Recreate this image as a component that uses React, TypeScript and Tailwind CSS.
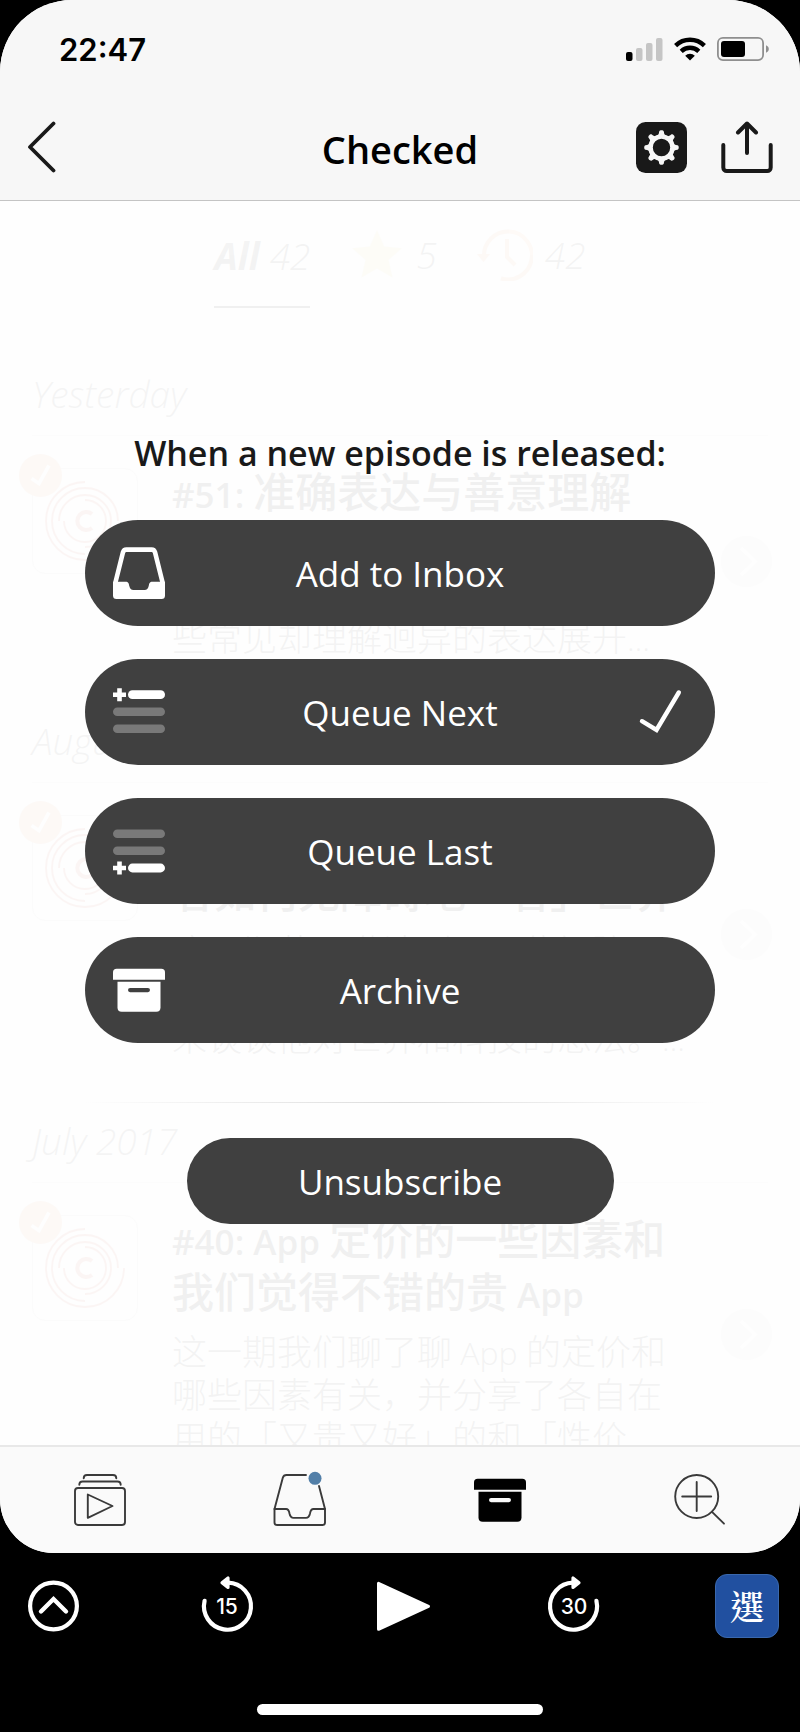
import React from "react";

const INK = "#191919";

function SignalIcon() {
  return (
    <svg width="37" height="24" viewBox="0 0 37 24" aria-hidden="true">
      <rect x="0" y="15" width="6.5" height="9" rx="2" fill="#000" />
      <rect x="10" y="11" width="6.5" height="13" rx="2" fill="#c5c5c5" />
      <rect x="20" y="6" width="6.5" height="18" rx="2" fill="#c5c5c5" />
      <rect x="30" y="1" width="6.5" height="23" rx="2" fill="#c5c5c5" />
    </svg>
  );
}

function WifiIcon() {
  return (
    <svg width="32" height="24" viewBox="0 0 32 24" fill="none" stroke="#000" strokeWidth="4.4" aria-hidden="true">
      <path d="M1.6 8.6a20.6 20.6 0 0 1 28.8 0" />
      <path d="M7.2 14.4a12.6 12.6 0 0 1 17.6 0" />
      <path d="M16 23.6l-4.8-4.8a6.8 6.8 0 0 1 9.6 0z" fill="#000" stroke="none" />
    </svg>
  );
}

function BatteryIcon() {
  return (
    <svg width="52" height="24" viewBox="0 0 52 24" aria-hidden="true">
      <rect x="0.9" y="0.9" width="45.2" height="22.2" rx="5" fill="none" stroke="#8f8f8f" strokeWidth="1.8" />
      <rect x="4" y="4" width="24" height="16" rx="3" fill="#000" />
      <path d="M49 8.2c1.8.8 2.8 2.1 2.8 3.8s-1 3-2.8 3.8z" fill="#8f8f8f" />
    </svg>
  );
}

function BackIcon() {
  return (
    <svg width="30" height="52" viewBox="0 0 30 52" fill="none" stroke={INK} strokeWidth="3.8" strokeLinecap="round" strokeLinejoin="round" aria-hidden="true">
      <path d="M26.5 2.5L3 26L26.5 49.5" />
    </svg>
  );
}

function GearIcon() {
  return (
    <svg width="51" height="51" viewBox="0 0 51 51" aria-hidden="true">
      <rect width="51" height="51" rx="9.5" fill={INK} />
      <circle cx="25.5" cy="25.5" r="11" fill="none" stroke="#f7f7f7" strokeWidth="4.6" />
      {[0, 45, 90, 135, 180, 225, 270, 315].map((a) => (
        <path
          key={a}
          d="M20 14.6C22.6 13.6 22.9 11.5 23.2 9.5C23.5 7.8 27.5 7.8 27.8 9.5C28.1 11.5 28.4 13.6 31 14.6Z"
          fill="#f7f7f7"
          transform={`rotate(${a} 25.5 25.5)`}
        />
      ))}
    </svg>
  );
}

function ShareIcon() {
  return (
    <svg width="52" height="52" viewBox="0 0 52 52" fill="none" stroke={INK} strokeWidth="4" strokeLinecap="round" strokeLinejoin="round" aria-hidden="true">
      <path d="M2.3 24v22.5a3.5 3.5 0 0 0 3.5 3.5h40.4a3.5 3.5 0 0 0 3.5-3.5V24" />
      <path d="M26 32V2.5M17 11.5l9-9 9 9" />
    </svg>
  );
}

function InboxSolidIcon() {
  return (
    <svg width="52" height="52" viewBox="0 0 52 52" aria-hidden="true">
      <path d="M2.3 36L10 5.2Q10.8 2.6 13.3 2.6H38.7Q41.2 2.6 42 5.2L49.7 36" fill="none" stroke="#fff" strokeWidth="4.6" />
      <path d="M0 34.7H12.5C15.5 34.7 15.8 36.5 16.3 39C17 42 18 42.9 20.5 42.9H31.5C34 42.9 35 42 35.7 39C36.2 36.5 36.5 34.7 39.5 34.7H52V48.5Q52 52 48.5 52H3.5Q0 52 0 48.5Z" fill="#fff" />
    </svg>
  );
}

function QueueNextIcon() {
  return (
    <svg width="52" height="52" viewBox="0 0 52 52" aria-hidden="true">
      <path d="M0 8.7h13M6.5 2.2v13" stroke="#fff" strokeWidth="4.6" />
      <rect x="15" y="4.3" width="37" height="8.8" rx="4.4" fill="#fff" />
      <rect x="0" y="21.5" width="52" height="8.6" rx="4.3" fill="#797979" />
      <rect x="0" y="38.5" width="52" height="8.6" rx="4.3" fill="#797979" />
    </svg>
  );
}

function QueueLastIcon() {
  return (
    <svg width="52" height="52" viewBox="0 0 52 52" aria-hidden="true">
      <rect x="0" y="4.5" width="52" height="8.6" rx="4.3" fill="#797979" />
      <rect x="0" y="21.5" width="52" height="8.6" rx="4.3" fill="#797979" />
      <path d="M0 43h13M6.5 36.5v13" stroke="#fff" strokeWidth="4.6" />
      <rect x="15" y="38.6" width="37" height="8.8" rx="4.4" fill="#fff" />
    </svg>
  );
}

function ArchiveIcon({ slot }: { slot: string }) {
  return (
    <svg width="52" height="52" viewBox="0 0 52 52" fill="currentColor" aria-hidden="true">
      <path d="M0 15.8V8.5Q0 4.8 3.7 4.8H48.3Q52 4.8 52 8.5V15.8Z" />
      <path d="M4.5 17.8H47.5V43.5Q47.5 47.7 43.3 47.7H8.7Q4.5 47.7 4.5 43.5Z" />
      <rect x="15" y="24" width="22" height="4.2" rx="2.1" fill={slot} />
    </svg>
  );
}

function TickIcon() {
  return (
    <svg width="52" height="52" viewBox="0 0 52 52" fill="none" stroke="#fff" strokeWidth="4.4" strokeLinecap="round" aria-hidden="true">
      <path d="M7 35.2L21.5 43.9L43.8 6.5" />
    </svg>
  );
}

function StackIcon() {
  return (
    <svg width="52" height="52" viewBox="0 0 52 52" fill="none" stroke="#3a3a3a" strokeWidth="1.9" strokeLinecap="round" strokeLinejoin="round" aria-hidden="true">
      <path d="M9.7 4.3Q9.7 1 13 1H39Q42.3 1 42.3 4.3" />
      <path d="M5.3 10.8Q5.3 7.5 8.6 7.5H43.4Q46.7 7.5 46.7 10.8" />
      <rect x="1" y="14" width="50" height="37" rx="3" />
      <path d="M13.8 20.5L38.5 32L13.8 43.8Z" />
    </svg>
  );
}

function InboxOutlineIcon() {
  return (
    <svg width="54" height="56" viewBox="0 -4 54 56" fill="none" stroke="#3a3a3a" strokeWidth="1.9" strokeLinecap="round" strokeLinejoin="round" aria-hidden="true">
      <path d="M33 1H13.5Q10.6 1 9.8 3.7L1.5 35V48.5Q1.5 51 4 51H49.5Q52 51 52 48.5V35L46 12" />
      <path d="M1.5 35H13C15.5 35 16 36.5 16.5 39.5C17.2 42.8 18 43.9 20.5 43.9H33C35.5 43.9 36.3 42.8 37 39.5C37.5 36.5 38 35 40.5 35H52" />
      <circle cx="42" cy="4.3" r="6.5" fill="#527fa8" stroke="none" />
    </svg>
  );
}

function SearchPlusIcon() {
  return (
    <svg width="52" height="52" viewBox="0 0 52 52" fill="none" stroke="#3a3a3a" strokeWidth="1.9" strokeLinecap="round" aria-hidden="true">
      <circle cx="22.7" cy="22.5" r="21.5" />
      <path d="M8.2 22.5h29M22.7 8v29M38 37.8L50 49.7" />
    </svg>
  );
}

function ExpandIcon() {
  return (
    <svg width="64" height="64" viewBox="0 0 64 64" fill="none" stroke="#fff" strokeWidth="4.2" strokeLinecap="round" strokeLinejoin="miter" aria-hidden="true">
      <circle cx="32.5" cy="32" r="23.4" />
      <path d="M20 37.5L32.5 25L45 37.5" strokeWidth="4.4" />
    </svg>
  );
}

function SkipIcon({ seconds, forward }: { seconds: number; forward?: boolean }) {
  return (
    <svg width="64" height="64" viewBox="0 0 64 64" aria-hidden="true">
      <g transform={forward ? "translate(64 0) scale(-1 1)" : undefined} fill="none" stroke="#fff" strokeWidth="4.2" strokeLinecap="round" strokeLinejoin="round">
        <path d="M33 8.7A23.5 23.5 0 1 1 9.6 26.8" />
        <path d="M27 8.7L33 4V13.4Z" fill="#fff" strokeWidth="3.2" />
      </g>
      <text x="32" y="39.5" textAnchor="middle" fill="#fff" fontFamily="Inter, sans-serif" fontSize="21" fontWeight="500">
        {seconds}
      </text>
    </svg>
  );
}

function PlayIcon() {
  return (
    <svg width="64" height="64" viewBox="0 0 64 64" fill="#fff" stroke="#fff" strokeWidth="3" strokeLinejoin="round" aria-hidden="true">
      <path d="M10.5 9.3V55.3L60.5 32.3Z" />
    </svg>
  );
}

function CoverArt() {
  return (
    <svg width="106" height="106" viewBox="0 0 106 106" fill="none" stroke="#d8604c" strokeWidth="1.8" aria-hidden="true">
      <rect x="0.5" y="0.5" width="105" height="105" rx="13" stroke="#ccc" strokeWidth="1" />
      <path d="M53 14A39 39 0 0 0 53 92A39 39 0 0 0 92 53" />
      <path d="M53 20A33 33 0 0 0 53 86M53 20A33 33 0 0 1 86 53" />
      <path d="M27 53A26 26 0 0 1 79 53A26 26 0 0 1 53 79" />
      <path d="M53 32A21 21 0 0 1 53 74A21 21 0 0 1 32 53" />
      <path d="M60 46A9 9 0 1 0 60 60" strokeWidth="4" />
    </svg>
  );
}

function DoneBadge() {
  return (
    <svg className="absolute top-[-14px] left-[-13px]" width="43" height="43" viewBox="0 0 43 43" aria-hidden="true">
      <circle cx="21.5" cy="21.5" r="21.5" fill="#f8a872" />
      <path d="M12.5 24.5L20 29.5L30 11.5" fill="none" stroke="#fff" strokeWidth="3.8" />
    </svg>
  );
}

type Episode = { month: string; no: string; title: React.ReactNode[]; body: React.ReactNode[] };

const titleLatin = "font-['Open_Sans'] text-[35px] leading-none font-semibold";
const bodyLatin = "font-['Open_Sans'] text-[32px] leading-none";

const episodes: Episode[] = [
  {
    month: "Yesterday",
    no: "51",
    title: [<><span className={titleLatin}>#51: </span>准确表达与善意理解</>],
    body: ["这一期我们聊了聊如何准确表达", "和善意理解，围绕生活中的一", <>些常见却理解迥异的表达展开<span className={bodyLatin}>…</span></>],
  },
  {
    month: "August 2017",
    no: "41",
    title: [<><span className={titleLatin}>#41: </span>和视障开发者聊聊</>, "者如何无障碍地「看」世界"],
    body: ["这一期节目邀请到了一位视障", "开发者，和我们聊聊他的生活", <>来谈谈他对世界和科技的想法。<span className={bodyLatin}>…</span></>],
  },
  {
    month: "July 2017",
    no: "40",
    title: [
      <><span className={titleLatin}>#40: App </span>定价的一些因素和</>,
      <>我们觉得不错的贵<span className={titleLatin}> App</span></>,
    ],
    body: [
      <>这一期我们聊了聊<span className={bodyLatin}> App </span>的定价和</>,
      "哪些因素有关，并分享了各自在",
      <>用的「又贵又好」的和「性价<span className={bodyLatin}>…</span></>,
    ],
  },
];

function EpisodeList() {
  return (
    <div className="absolute inset-0 overflow-hidden text-black opacity-5" aria-hidden="true">
      <div className="mb-0.5 flex h-[107px] justify-center gap-10 font-['Open_Sans'] text-[37px] font-light text-black/80 italic">
        <div className="flex items-center gap-2.5 border-b-2 border-black pt-1">
          <span className="font-bold">All</span> 42
        </div>
        <div className="flex items-center gap-3">
          <svg width="54" height="54" viewBox="0 0 24 24" fill="#fae68c">
            <path d="M12 1l3.2 7.2 7.8.8-5.9 5.2 1.8 7.8L12 18l-6.9 4 1.800-7.8L1 9l7.8-.8z" />
          </svg>
          5
        </div>
        <div className="flex items-center gap-3">
          <svg width="56" height="52" viewBox="0 0 56 52" fill="none" stroke="#f8a872" strokeWidth="4">
            <path d="M7 28A24 24 0 1 1 24 49.5" />
            <path d="M30 10v18l8 8" />
            <path d="M0 25h13l-6.5 8z" fill="#f8a872" stroke="none" />
          </svg>
          42
        </div>
      </div>
      {episodes.map((ep) => (
        <section key={ep.no} className="pt-[59px]">
          <h3 className="px-8 font-['Open_Sans'] text-[37px] leading-[50px] font-light text-black/70 italic">{ep.month}</h3>
          <div className="mx-8 mt-4 flex items-center border-t border-black/10 pt-[29px]">
            <div className="relative mt-[3px] self-start">
              <CoverArt />
              <DoneBadge />
            </div>
            <div className="ml-[34px] flex-1 font-['Noto_Sans_CJK_SC'] whitespace-nowrap">
              <h4 className="-mt-0.5 text-[42px] leading-[53px] font-medium">
                {ep.title.map((line, i) => (
                  <span key={i} className="block h-[53px]">{line}</span>
                ))}
              </h4>
              <p className="mt-3 text-[35px] leading-[43px] font-light text-black/80">
                {ep.body.map((line, i) => (
                  <span key={i} className="block h-[43px]">{line}</span>
                ))}
              </p>
            </div>
            <svg width="51" height="51" viewBox="0 0 51 51" className="-mr-1 shrink-0">
              <circle cx="25.5" cy="25.5" r="25.5" fill="#ddd" />
              <path d="M20 12l14 13.5L20 39" fill="none" stroke="#fff" strokeWidth="4" />
            </svg>
          </div>
        </section>
      ))}
    </div>
  );
}

const actions = [
  { label: "Add to Inbox", icon: <InboxSolidIcon />, selected: false },
  { label: "Queue Next", icon: <QueueNextIcon />, selected: true },
  { label: "Queue Last", icon: <QueueLastIcon />, selected: false },
  { label: "Archive", icon: <ArchiveIcon slot="#404040" />, selected: false },
];

export default function App() {
  return (
    <div className="flex min-h-screen flex-col bg-black font-['Open_Sans',sans-serif]">
      <div className="flex flex-col overflow-hidden rounded-t-[72px] rounded-b-[54px] bg-[#fefefe]">
        <header className="border-b border-[#c4c4c4] bg-[#f7f7f7] pb-1">
          <div className="flex h-[98px] items-center justify-between pr-[31px] pl-[59px]">
            <time className="pt-0.5 font-[Inter] text-[31px] leading-10 font-semibold text-black">22:47</time>
            <div className="flex items-center gap-[11px]">
              <SignalIcon />
              <WifiIcon />
              <BatteryIcon />
            </div>
          </div>
          <div className="grid h-[98px] grid-cols-[1fr_auto_1fr] items-center px-[27px]">
            <button type="button" aria-label="Back" className="justify-self-start"><BackIcon /></button>
            <h1 className="pt-1 text-[38px] leading-[52px] font-semibold text-black">Checked</h1>
            <div className="flex gap-[34px] justify-self-end">
              <button type="button" aria-label="Settings"><GearIcon /></button>
              <button type="button" aria-label="Share"><ShareIcon /></button>
            </div>
          </div>
        </header>

        <main className="relative">
          <EpisodeList />
          <div className="relative flex flex-col items-center px-[85px] pt-[227px] pb-[221px]">
            <h2 className="text-[34px] leading-[50px] font-semibold whitespace-nowrap text-[#191919]">
              When a new episode is released:
            </h2>
            <div className="mt-[42px] flex w-full flex-col gap-[33px]">
              {actions.map((a) => (
                <button
                  key={a.label}
                  type="button"
                  aria-pressed={a.selected}
                  className="flex h-[106px] w-full items-center rounded-full bg-[#404040] px-7 text-white"
                >
                  {a.icon}
                  <span className="flex-1 pt-0.5 text-center text-[35px] leading-[50px]">{a.label}</span>
                  <span className="h-[52px] w-[52px]">{a.selected && <TickIcon />}</span>
                </button>
              ))}
            </div>
            <hr className="mt-[59px] h-px w-full border-0 bg-linear-to-r from-transparent via-[#dcdcdc] to-transparent" />
            <button type="button" className="mt-[35px] h-[86px] w-[427px] rounded-full bg-[#404040] pt-0.5 text-[35px] leading-[50px] text-white">
              Unsubscribe
            </button>
          </div>
        </main>

        <nav className="relative grid h-[108px] grid-cols-4 items-center border-t-2 border-[#e8e8e8] bg-[#fafafa]">
          <a href="#queue" aria-label="Queue" className="justify-self-center"><StackIcon /></a>
          <a href="#inbox" aria-label="Inbox" className="-mt-1 justify-self-center"><InboxOutlineIcon /></a>
          <a href="#archive" aria-label="Archive" aria-current="page" className="justify-self-center text-black"><ArchiveIcon slot="#fafafa" /></a>
          <a href="#search" aria-label="Search" className="justify-self-center"><SearchPlusIcon /></a>
        </nav>
      </div>

      <footer className="flex flex-col items-center px-[21px] pt-[21px] pb-[17px]">
        <div className="flex w-full justify-between">
          <button type="button" aria-label="Expand player"><ExpandIcon /></button>
          <button type="button" aria-label="Back 15 seconds"><SkipIcon seconds={15} /></button>
          <button type="button" aria-label="Play"><PlayIcon /></button>
          <button type="button" aria-label="Forward 30 seconds"><SkipIcon seconds={30} forward /></button>
          <button
            type="button"
            className="h-16 w-16 rounded-xl border border-[#3a68ad] bg-[#2150a0] font-['Noto_Serif_CJK_TC','Noto_Sans_CJK_TC',serif] text-[34px] leading-[60px] font-semibold text-white"
          >
            選
          </button>
        </div>
        <div className="mt-[66px] h-[11px] w-[286px] rounded-full bg-white" />
      </footer>
    </div>
  );
}
